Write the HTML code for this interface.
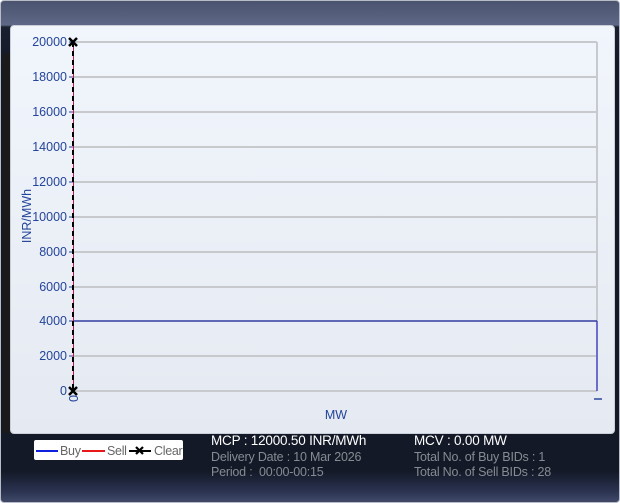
<!DOCTYPE html>
<html><head><style>
body{margin:0;width:620px;height:503px;overflow:hidden;font-family:"Liberation Sans","DejaVu Sans",sans-serif;}
#f{position:absolute;left:0;top:0;width:618px;height:501px;border:1px solid #b8bcc6;border-radius:4px;background:linear-gradient(#4a536e 0,#5e6886 24px,#1a2030 26px,#131927 60px,#131927 470px,#2a3250 490px,#3e4766 500px);overflow:hidden}
#ls{position:absolute;left:2px;top:52px;width:8px;height:380px;background:#1a1a1a}
#p{position:absolute;left:10px;top:25px;width:603px;height:407px;border-radius:4px;background:linear-gradient(#f1f5fc,#e5e9f1);border:1px solid #c9ced8}
.t{position:absolute;font-size:12.5px;letter-spacing:-0.2px;white-space:nowrap}
</style></head><body>
<div id="f"><div id="ls"></div></div>
<div id="p"></div>
<svg style="position:absolute;left:0;top:0" width="620" height="503">
<g font-family="Liberation Sans,sans-serif" font-size="12.5" fill="#23449a" text-anchor="end">
<text x="67" y="46">20000</text><text x="67" y="81">18000</text><text x="67" y="116">16000</text>
<text x="67" y="151">14000</text><text x="67" y="186">12000</text><text x="67" y="221">10000</text>
<text x="67" y="256">8000</text><text x="67" y="291">6000</text><text x="67" y="325">4000</text>
<text x="67" y="360">2000</text><text x="67" y="395">0</text>
</g>
<g stroke="#c8c9cc" stroke-width="2">
<line x1="73" y1="42" x2="597" y2="42"/><line x1="73" y1="77" x2="597" y2="77"/><line x1="73" y1="112" x2="597" y2="112"/>
<line x1="73" y1="147" x2="597" y2="147"/><line x1="73" y1="182" x2="597" y2="182"/><line x1="73" y1="217" x2="597" y2="217"/>
<line x1="73" y1="252" x2="597" y2="252"/><line x1="73" y1="287" x2="597" y2="287"/><line x1="73" y1="356" x2="597" y2="356"/>
<line x1="73" y1="391" x2="597" y2="391"/><line x1="597" y1="42" x2="597" y2="391"/>
</g>
<g stroke="#23449a" stroke-width="1">
<line x1="69" y1="42" x2="73" y2="42"/><line x1="69" y1="77" x2="73" y2="77"/><line x1="69" y1="112" x2="73" y2="112"/>
<line x1="69" y1="147" x2="73" y2="147"/><line x1="69" y1="182" x2="73" y2="182"/><line x1="69" y1="217" x2="73" y2="217"/>
<line x1="69" y1="252" x2="73" y2="252"/><line x1="69" y1="287" x2="73" y2="287"/><line x1="69" y1="321" x2="73" y2="321"/>
<line x1="69" y1="356" x2="73" y2="356"/>
<line x1="594" y1="399" x2="602" y2="399" stroke-width="2" stroke="#5a70b0"/>
</g>
<line x1="73" y1="321" x2="597" y2="321" stroke="#101890" stroke-width="1.3"/>
<line x1="597" y1="321" x2="597" y2="391" stroke="#3a3ed0" stroke-width="1.3"/>
<line x1="73.5" y1="42" x2="73.5" y2="391" stroke="#d0104a" stroke-width="1"/>
<line x1="73" y1="42" x2="73" y2="391" stroke="#000" stroke-width="2" stroke-dasharray="5,4"/>
<g stroke="#000" stroke-width="2.5"><path d="M69 38l8 8M77 38l-8 8"/><path d="M69 387l8 8M77 387l-8 8"/></g>
<text x="73" y="395" font-size="12.5" fill="#23449a" transform="rotate(90 73 395)" font-family="Liberation Sans,sans-serif" dy="4">0</text>
<text x="336" y="419" font-size="12.5" fill="#23449a" text-anchor="middle" font-family="Liberation Sans,sans-serif">MW</text>
<text x="31" y="216" font-size="12.5" fill="#23449a" text-anchor="middle" transform="rotate(-90 31 216)" font-family="Liberation Sans,sans-serif">INR/MWh</text>
<rect x="34" y="440" width="149" height="20" rx="2" fill="#fff"/>
<line x1="36" y1="451" x2="58" y2="451" stroke="#1020e0" stroke-width="2"/>
<line x1="82" y1="451" x2="105" y2="451" stroke="#e81818" stroke-width="2"/>
<line x1="129" y1="451" x2="151" y2="451" stroke="#000" stroke-width="2"/>
<path d="M136 447l7 7M143 447l-7 7" stroke="#000" stroke-width="2.2"/>
<g font-family="Liberation Sans,sans-serif" font-size="12.5" fill="#666" letter-spacing="-0.3">
<text x="60" y="455">Buy</text><text x="107" y="455">Sell</text><text x="154" y="455">Clear</text></g>
</svg>
<div class="t" style="left:211px;top:433px;color:#fff;font-size:13.5px">MCP : 12000.50 INR/MWh</div>
<div class="t" style="left:211px;top:450px;color:#878b93">Delivery Date : 10 Mar 2026</div>
<div class="t" style="left:211px;top:465px;color:#878b93">Period :&nbsp; 00:00-00:15</div>
<div class="t" style="left:414px;top:433px;color:#fff;font-size:13.5px">MCV : 0.00 MW</div>
<div class="t" style="left:414px;top:450px;color:#878b93">Total No. of Buy BIDs : 1</div>
<div class="t" style="left:414px;top:465px;color:#878b93">Total No. of Sell BIDs : 28</div>
</body></html>
